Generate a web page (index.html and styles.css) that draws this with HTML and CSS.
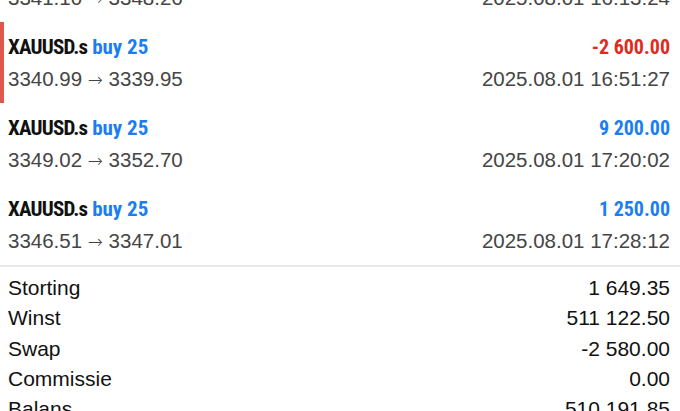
FILE: index.html
```html
<!DOCTYPE html>
<html lang="nl">
<head>
<meta charset="utf-8">
<title>Historie</title>
<link rel="stylesheet" href="styles.css">
</head>
<body>
<div class="screen">
  <ul class="deals">
    <li class="deal">
      <div class="line">
        <span class="title"><span class="sym">XAUUSD.s</span> <span class="side">buy 25</span></span>
        <span class="amount pos">2 850.00</span>
      </div>
      <div class="line sub">
        <span>3341.10 <span class="arrow">→</span> 3348.26</span>
        <span>2025.08.01 16:13:24</span>
      </div>
    </li>
    <li class="deal marked">
      <div class="line">
        <span class="title"><span class="sym">XAUUSD.s</span> <span class="side">buy 25</span></span>
        <span class="amount neg">-2 600.00</span>
      </div>
      <div class="line sub">
        <span>3340.99 <span class="arrow">→</span> 3339.95</span>
        <span>2025.08.01 16:51:27</span>
      </div>
    </li>
    <li class="deal">
      <div class="line">
        <span class="title"><span class="sym">XAUUSD.s</span> <span class="side">buy 25</span></span>
        <span class="amount pos">9 200.00</span>
      </div>
      <div class="line sub">
        <span>3349.02 <span class="arrow">→</span> 3352.70</span>
        <span>2025.08.01 17:20:02</span>
      </div>
    </li>
    <li class="deal">
      <div class="line">
        <span class="title"><span class="sym">XAUUSD.s</span> <span class="side">buy 25</span></span>
        <span class="amount pos">1 250.00</span>
      </div>
      <div class="line sub">
        <span>3346.51 <span class="arrow">→</span> 3347.01</span>
        <span>2025.08.01 17:28:12</span>
      </div>
    </li>
  </ul>
  <dl class="summary">
    <div class="srow"><dt>Storting</dt><dd>1 649.35</dd></div>
    <div class="srow"><dt>Winst</dt><dd>511 122.50</dd></div>
    <div class="srow"><dt>Swap</dt><dd>-2 580.00</dd></div>
    <div class="srow"><dt>Commissie</dt><dd>0.00</dd></div>
    <div class="srow"><dt>Balans</dt><dd>510 191.85</dd></div>
  </dl>
</div>
</body>
</html>
```
FILE: styles.css
```css
html, body {
  margin: 0;
  padding: 0;
  background: #ffffff;
}
body {
  width: 680px;
  height: 411px;
  overflow: hidden;
  font-family: "Liberation Sans", Arial, sans-serif;
}
.screen {
  margin-top: -59px;
}
.deals {
  list-style: none;
  margin: 0;
  padding: 0;
}
.deal {
  height: 81px;
  box-sizing: border-box;
  padding: 10px 10px 9px 8px;
  display: flex;
  flex-direction: column;
  gap: 2px;
}
.deal.marked {
  box-shadow: inset 4px 0 0 #e0584c;
}
.line {
  display: flex;
  justify-content: space-between;
  align-items: center;
  height: 30px;
  white-space: nowrap;
}
.title, .amount {
  font-family: "Liberation Sans Narrow", "Roboto Condensed", "DejaVu Sans Condensed", sans-serif;
  font-weight: 700;
  font-size: 21px;
}
.sym {
  color: #111111;
  letter-spacing: -0.8px;
}
.side {
  color: #1a7ef2;
}
.amount {
  font-size: 20px;
}
.amount.pos {
  color: #1a7ef2;
}
.amount.neg {
  color: #df2a20;
}
.sub {
  font-size: 20.5px;
  color: #454545;
}
.arrow {
  font-family: "DejaVu Sans", sans-serif;
  font-size: 18px;
  font-weight: 300;
}
.summary {
  margin: 0;
  border-top: 2px solid #e8e8e8;
  padding: 6px 10px 0 8px;
}
.srow {
  display: flex;
  justify-content: space-between;
  height: 30.3px;
  line-height: 30.3px;
  font-size: 21px;
  color: #111111;
}
.srow dt, .srow dd {
  margin: 0;
}
```
